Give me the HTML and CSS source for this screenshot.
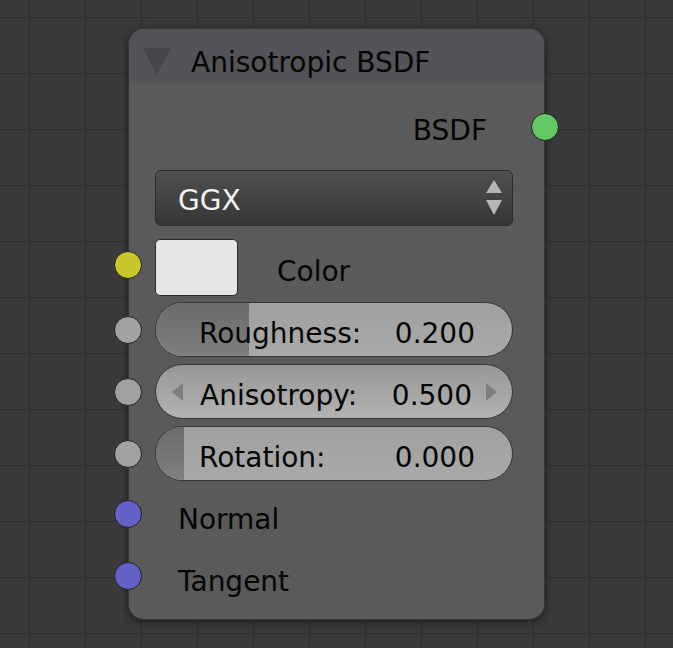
FILE: index.html
```html
<!DOCTYPE html>
<html lang="en">
<head>
  <meta charset="UTF-8">
  <meta name="viewport" content="width=device-width, initial-scale=1">
  <title>Anisotropic BSDF Node</title>
  <link rel="stylesheet" href="styles.css">
</head>
<body>

  <div class="node">
    <div class="node-header">
      <span class="collapse"></span>
      <span class="title">Anisotropic BSDF</span>
    </div>

    <div class="node-body">
      <div class="row row-output">
        <span class="text">BSDF</span>
        <i class="socket socket-out shader"></i>
      </div>

      <div class="row row-dropdown">
        <div class="dropdown">
          <span class="dropdown-text">GGX</span>
          <span class="updown">
            <svg width="16" height="36" viewBox="0 0 16 36">
              <polygon points="8,0 16,13 0,13" fill="#b5b5b5"/>
              <polygon points="0,20 16,20 8,35" fill="#b5b5b5"/>
            </svg>
          </span>
        </div>
      </div>

      <div class="row row-color">
        <i class="socket socket-in color"></i>
        <div class="swatch"></div>
        <span class="text">Color</span>
      </div>

      <div class="row row-slider first">
        <i class="socket socket-in value"></i>
        <div class="slider">
          <div class="fill" style="width: 93px"></div>
          <span class="label">Roughness:</span>
          <span class="value">0.200</span>
        </div>
      </div>

      <div class="row row-slider">
        <i class="socket socket-in value"></i>
        <div class="slider slider-num">
          <span class="arrow arrow-left"></span>
          <span class="label">Anisotropy:</span>
          <span class="value">0.500</span>
          <span class="arrow arrow-right"></span>
        </div>
      </div>

      <div class="row row-slider">
        <i class="socket socket-in value"></i>
        <div class="slider">
          <div class="fill" style="width: 28px"></div>
          <span class="label">Rotation:</span>
          <span class="value">0.000</span>
        </div>
      </div>

      <div class="row row-vector first">
        <i class="socket socket-in vector"></i>
        <span class="text">Normal</span>
      </div>

      <div class="row row-vector">
        <i class="socket socket-in vector"></i>
        <span class="text">Tangent</span>
      </div>
    </div>
  </div>

</body>
</html>
```

FILE: styles.css
```css
* {
  box-sizing: border-box;
}
html {
  background: #3a3a3a;
}
body {
  margin: 0;
  min-height: 648px;
  padding: 28px 0 0 128px;
  font-family: 'DejaVu Sans', sans-serif;
  font-size: 28px;
  color: #050505;
  background-color: #3a3a3a;
  background-image:
    linear-gradient(to right, #2f2f2f 1px, transparent 1px),
    linear-gradient(to bottom, #2f2f2f 1px, transparent 1px);
  background-size: 56px 56px;
  background-position: 29px 17px;
}

.node {
  width: 417px;
  height: 592px;
  border-radius: 16px;
  background: rgba(94, 94, 94, 0.9);
  box-shadow: 0 2px 8px rgba(0, 0, 0, 0.55);
  border: 1px solid rgba(30, 30, 30, 0.6);
}
.node-header {
  height: 55px;
  display: flex;
  align-items: center;
  padding: 10px 0 0 14px;
  border-radius: 15px 15px 0 0;
  background: rgba(84, 83, 89, 0.95);
}
.collapse {
  width: 0;
  height: 0;
  border-left: 14px solid transparent;
  border-right: 14px solid transparent;
  border-top: 27px solid #45454a;
  margin-right: 20px;
}
.title {
  line-height: 1;
  margin-top: 2px;
}

.node-body {
  padding-top: 15px;
}
.row {
  position: relative;
  display: flex;
  align-items: center;
  padding: 0 31px 0 26px;
}
.text {
  line-height: 1;
}

.socket {
  position: absolute;
  width: 28px;
  height: 28px;
  border-radius: 50%;
  border: 1px solid #202020;
  top: 50%;
  margin-top: -14px;
}
.socket-in {
  left: -15px;
}
.socket-out {
  right: -15px;
}
.shader {
  background: #63c763;
}
.color {
  background: #c7c729;
}
.value {
  background: #a1a1a1;
}
.vector {
  background: #6363c7;
}

.row-output {
  height: 56px;
  justify-content: flex-end;
  padding-right: 57px;
}
.row-output .text {
  margin-top: 8px;
}

.row-dropdown {
  margin-top: 15px;
}
.dropdown {
  flex: 1;
  height: 56px;
  display: flex;
  align-items: center;
  justify-content: space-between;
  padding: 0 10px 0 22px;
  border-radius: 6px;
  border: 1px solid #2c2c2c;
  background: linear-gradient(#4f4f4f, #363636);
  color: #f2f2f2;
}
.dropdown-text {
  line-height: 1;
  margin-top: 5px;
}
.updown {
  display: flex;
}

.row-color {
  margin-top: 13px;
  height: 57px;
}
.swatch {
  width: 83px;
  height: 57px;
  border-radius: 5px;
  border: 1px solid #2a2a2a;
  background: #e6e6e6;
  margin-right: 39px;
}
.row-color .text {
  margin-top: 8px;
}
.row-color .socket {
  margin-top: -17px;
}

.row-slider {
  margin-top: 7px;
}
.row-slider.first {
  margin-top: 6px;
}
.slider {
  position: relative;
  flex: 1;
  height: 55px;
  display: flex;
  align-items: center;
  justify-content: space-between;
  padding: 0 37px 0 43px;
  border-radius: 28px;
  border: 1px solid #363636;
  background: linear-gradient(#a0a0a0, #a9a9a9);
  overflow: hidden;
}
.slider .fill {
  position: absolute;
  left: 0;
  top: 0;
  bottom: 0;
  background: linear-gradient(#6b6b6b, #7f7f7f);
}
.slider .label,
.slider .value {
  position: relative;
  top: 4px;
  line-height: 1;
}
.slider .value {
  background: none;
}
.slider-num {
  background: linear-gradient(#979797, #b3b3b3);
  padding: 0 15px 0 16px;
}
.slider-num .label {
  margin-left: 17px;
  margin-right: auto;
}
.slider-num .value {
  margin-right: 14px;
}
.arrow {
  width: 0;
  height: 0;
  border-top: 9px solid transparent;
  border-bottom: 9px solid transparent;
}
.arrow-left {
  border-right: 11px solid #7e7e7e;
}
.arrow-right {
  border-left: 11px solid #7e7e7e;
}

.row-vector {
  height: 56px;
  margin-top: 6px;
  padding-left: 49px;
}
.row-vector.first {
  margin-top: 5px;
}
.row-vector .text {
  margin-top: 11px;
}
```
